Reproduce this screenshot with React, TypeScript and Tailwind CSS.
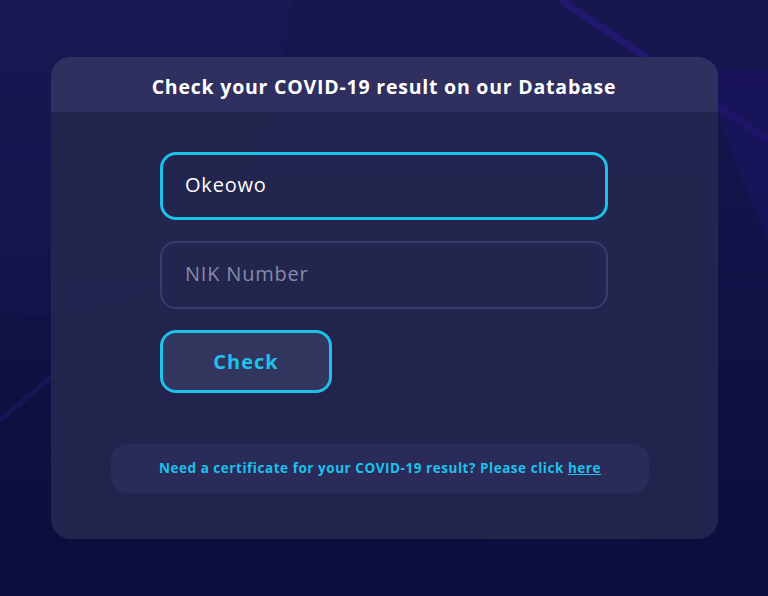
import React, { useState } from 'react';

const Background: React.FC = () => (
  <svg className="absolute inset-0 h-full w-full" viewBox="0 0 768 596" preserveAspectRatio="none" xmlns="http://www.w3.org/2000/svg">
    <defs>
      <linearGradient id="bg" x1="0" y1="0" x2="0" y2="1">
        <stop offset="0" stopColor="#15174f" />
        <stop offset="1" stopColor="#0a0e3c" />
      </linearGradient>
    </defs>
    <rect width="768" height="596" fill="url(#bg)" />
    <path d="M0 0 H292 C280 120 230 260 120 300 C70 320 30 315 0 310 Z" fill="#1b1d58" opacity="0.35" />
    <path d="M560 0 C630 45 700 95 768 140" stroke="#27197a" strokeWidth="8" fill="none" opacity="0.7" />
    <path d="M700 62 C730 72 750 72 768 66 V240 C740 180 720 120 700 62 Z" fill="#1c1464" opacity="0.6" />
    <path d="M0 420 C60 370 120 320 180 270" stroke="#1d1a66" strokeWidth="5" fill="none" opacity="0.6" />
    <path d="M430 596 C470 520 560 500 640 540 C700 570 740 560 768 540 V596 Z" fill="#0c1141" opacity="0.6" />
  </svg>
);

const App: React.FC = () => {
  const [name, setName] = useState('Okeowo');
  const [nik, setNik] = useState('');

  return (
    <div className="relative h-[596px] w-[768px] overflow-hidden font-['Open_Sans',sans-serif]">
      <Background />
      <div className="relative mx-auto mt-[57px] w-[667px] overflow-hidden rounded-[20px] bg-[#24264f]/95">
        <div className="flex h-[55px] items-center justify-center bg-[#2f305f] pt-1">
          <h1 className="text-[19.5px] font-bold tracking-[0.04em] text-white">Check your COVID-19 result on our Database</h1>
        </div>
        <div className="flex flex-col items-center pt-10 pb-[46px]">
          <div className="flex w-[448px] flex-col gap-[21px]">
            <input
              value={name}
              onChange={(e) => setName(e.target.value)}
              className="h-[68px] w-full rounded-2xl border-[3px] border-[#1cc2ea] bg-transparent px-[22px] pb-1 text-[20px] tracking-[0.04em] text-white outline-none"
            />
            <input
              value={nik}
              onChange={(e) => setNik(e.target.value)}
              placeholder="NIK Number"
              className="h-[68px] w-full rounded-2xl border-2 border-[#3a3b68] bg-transparent px-[23px] pb-1 text-[20px] tracking-[0.04em] text-white outline-none placeholder:text-[#8789a6]"
            />
            <button className="h-[63px] w-[172px] rounded-2xl border-[3px] border-[#1cc2ea] bg-[#32355e] text-[20px] font-bold tracking-[0.05em] text-[#1cc2ea]">
              Check
            </button>
          </div>
          <div className="mt-[51px] mr-2 flex h-[49px] w-[538px] items-center justify-center rounded-2xl bg-[#2a2b58]">
            <p className="text-[13.5px] font-bold tracking-[0.04em] text-[#1cc2ea]">
              Need a certificate for your COVID-19 result? Please click <a href="#" className="underline">here</a>
            </p>
          </div>
        </div>
      </div>
    </div>
  );
};

export default App;
